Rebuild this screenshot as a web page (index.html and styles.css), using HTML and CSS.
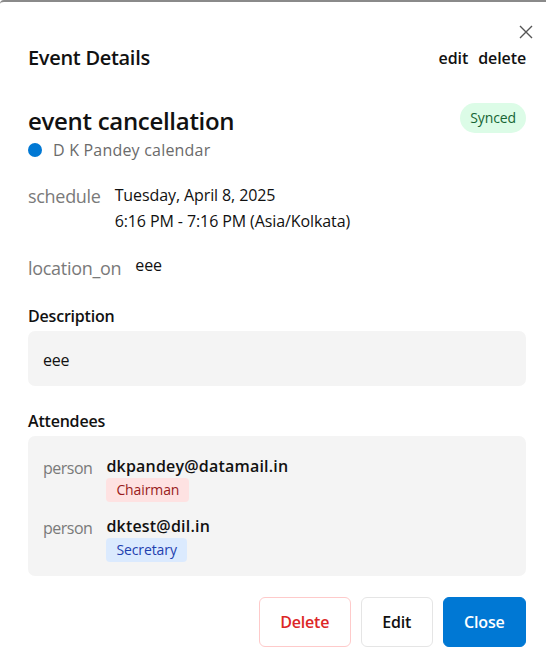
FILE: index.html
```html
<!DOCTYPE html>
<html lang="en">
<head>
<meta charset="utf-8">
<title>Event Details</title>
<link rel="stylesheet" href="styles.css">
</head>
<body>
<div class="dialog">
  <button class="close" aria-label="Close">
    <svg width="14" height="14" viewBox="0 0 14 14"><path d="M1 1 L13 13 M13 1 L1 13" stroke="#555" stroke-width="1.4" fill="none"/></svg>
  </button>
  <header class="head">
    <h1 class="head-title">Event Details</h1>
    <div class="head-actions"><span>edit</span><span>delete</span></div>
  </header>

  <section class="summary">
    <div class="summary-text">
      <h2 class="event-title">event cancellation</h2>
      <div class="calendar"><span class="dot"></span><span>D K Pandey calendar</span></div>
    </div>
    <span class="synced">Synced</span>
  </section>

  <div class="info schedule">
    <span class="icon">schedule</span>
    <div class="info-value">
      <div>Tuesday, April 8, 2025</div>
      <div>6:16 PM - 7:16 PM (Asia/Kolkata)</div>
    </div>
  </div>

  <div class="info location">
    <span class="icon">location_on</span>
    <div class="info-value">eee</div>
  </div>

  <h3 class="section-title desc-title">Description</h3>
  <div class="panel desc">eee</div>

  <h3 class="section-title att-title">Attendees</h3>
  <div class="panel attendees">
    <div class="attendee">
      <span class="icon">person</span>
      <div class="att-info">
        <div class="email">dkpandey@datamail.in</div>
        <span class="role role-red">Chairman</span>
      </div>
    </div>
    <div class="attendee">
      <span class="icon">person</span>
      <div class="att-info">
        <div class="email">dktest@dil.in</div>
        <span class="role role-blue">Secretary</span>
      </div>
    </div>
  </div>

  <footer class="actions">
    <button class="btn btn-delete">Delete</button>
    <button class="btn btn-edit">Edit</button>
    <button class="btn btn-close">Close</button>
  </footer>
</div>
</body>
</html>
```

FILE: styles.css
```css
* { box-sizing: border-box; }
html, body { margin: 0; padding: 0; background: #fff; }
body {
  font-family: "Open Sans", "Noto Sans", sans-serif;
  color: #111;
  height: 667px;
  overflow: hidden;
}
.dialog {
  position: relative;
  border-top: 2px solid #8a8a8a;
  border-top-left-radius: 4px;
  padding: 0 20px 0 28px;
  height: 667px;
}
.close {
  position: absolute;
  top: 23px;
  right: 13px;
  border: 0;
  background: none;
  padding: 0;
  width: 14px;
  height: 14px;
  line-height: 0;
}
.head {
  display: flex;
  justify-content: space-between;
  align-items: center;
  padding-top: 43px;
}
.head-title {
  margin: 0;
  font-size: 20px;
  font-weight: 600;
  line-height: 26px;
  letter-spacing: -0.3px;
}
.head-actions {
  display: flex;
  gap: 10px;
  font-size: 16px;
  font-weight: 600;
  letter-spacing: -0.1px;
}
.summary {
  display: flex;
  justify-content: space-between;
  align-items: flex-start;
  margin-top: 34px;
}
.event-title {
  margin: 0;
  font-size: 24px;
  font-weight: 600;
  line-height: 32px;
  letter-spacing: -0.3px;
}
.calendar {
  display: flex;
  align-items: center;
  gap: 11px;
  margin-top: 3px;
  font-size: 16px;
  color: #6b6b6b;
  line-height: 20px;
  letter-spacing: 0.2px;
}
.dot {
  width: 14px;
  height: 14px;
  border-radius: 50%;
  background: #0078d4;
}
.synced {
  margin-top: -2px;
  padding: 5px 10px;
  border-radius: 15px;
  background: #dcfce7;
  color: #166534;
  font-size: 14px;
  line-height: 20px;
  letter-spacing: -0.1px;
}
.info {
  display: flex;
  align-items: flex-start;
  gap: 14px;
}
.schedule { margin-top: 22px; }
.location { margin-top: 21px; }
.icon {
  color: #7a7a7a;
  font-size: 18px;
  line-height: 26px;
  letter-spacing: -0.3px;
}
.schedule .icon { margin-top: 1px; }
.info-value {
  font-size: 16px;
  line-height: 26px;
  letter-spacing: -0.1px;
}
.location .info-value { margin-top: -3px; }
.section-title {
  margin: 0;
  font-size: 16px;
  font-weight: 600;
  line-height: 22px;
  letter-spacing: -0.2px;
}
.desc-title { margin-top: 24px; }
.att-title { margin-top: 24px; }
.panel {
  background: #f4f4f4;
  border-radius: 7px;
  margin-top: 4px;
}
.desc {
  padding: 19px 15px 15px;
  font-size: 16px;
  line-height: 21px;
  letter-spacing: -0.2px;
}
.attendees {
  padding: 18px 15px 14px;
  display: flex;
  flex-direction: column;
  gap: 12px;
}
.attendee {
  display: flex;
  align-items: flex-start;
  gap: 14px;
}
.attendee .icon {
  font-size: 16px;
  margin-top: 1px;
  letter-spacing: -0.5px;
}
.att-info {
  display: flex;
  flex-direction: column;
  align-items: flex-start;
}
.email {
  font-size: 16px;
  font-weight: 600;
  line-height: 24px;
  letter-spacing: 0.2px;
}
.role {
  padding: 2px 10px;
  border-radius: 4px;
  font-size: 14px;
  line-height: 20px;
  letter-spacing: -0.1px;
}
.role-red { background: #fee2e2; color: #991b1b; }
.role-blue { background: #dbeafe; color: #1e40af; }
.actions {
  display: flex;
  justify-content: flex-end;
  gap: 10px;
  margin-top: 21px;
}
.btn {
  height: 50px;
  padding: 0 20.5px;
  border-radius: 6px;
  font-family: inherit;
  font-size: 16px;
  font-weight: 600;
  background: #fff;
  letter-spacing: -0.2px;
  cursor: pointer;
}
.btn-delete { border: 1px solid #fecaca; color: #dc2626; }
.btn-edit { border: 1px solid #e5e5e5; color: #111; }
.btn-close { border: 1px solid #0078d4; background: #0078d4; color: #fff; }
```
